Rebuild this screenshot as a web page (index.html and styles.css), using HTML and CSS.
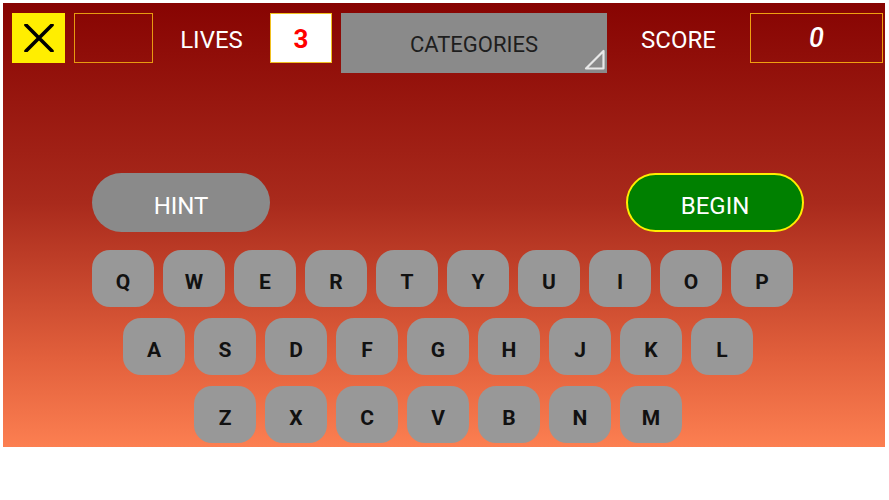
FILE: index.html
```html
<!DOCTYPE html>
<html>
<head>
<meta charset="utf-8">
<link rel="stylesheet" href="styles.css">
</head>
<body>
<div class="game">
  <div class="topbar">
    <div class="close-btn">
      <svg width="30" height="28" viewBox="0 0 30 28"><path d="M2 1 L28 27 M28 1 L2 27" stroke="#000" stroke-width="3.6" stroke-linecap="round"/></svg>
    </div>
    <div class="blank-box"></div>
    <div class="label lives-label">LIVES</div>
    <div class="lives-box">3</div>
    <div class="categories">
      <span>CATEGORIES</span>
      <svg class="corner" width="22" height="22" viewBox="0 0 22 22"><path d="M19.5 2 L19.5 19.5 L2 19.5 Z" fill="none" stroke="#e8e8e8" stroke-width="2.2" stroke-linejoin="round"/></svg>
    </div>
    <div class="label score-label">SCORE</div>
    <div class="score-box">0</div>
  </div>
  <div class="actions">
    <button class="hint">HINT</button>
    <button class="begin">BEGIN</button>
  </div>
  <div class="keyboard">
    <div class="row row1">
      <div class="key">Q</div><div class="key">W</div><div class="key">E</div><div class="key">R</div><div class="key">T</div><div class="key">Y</div><div class="key">U</div><div class="key">I</div><div class="key">O</div><div class="key">P</div>
    </div>
    <div class="row row2">
      <div class="key">A</div><div class="key">S</div><div class="key">D</div><div class="key">F</div><div class="key">G</div><div class="key">H</div><div class="key">J</div><div class="key">K</div><div class="key">L</div>
    </div>
    <div class="row row3">
      <div class="key">Z</div><div class="key">X</div><div class="key">C</div><div class="key">V</div><div class="key">B</div><div class="key">N</div><div class="key">M</div>
    </div>
  </div>
</div>
</body>
</html>
```

FILE: styles.css
```css
html, body {
  margin: 0;
  padding: 0;
  background: #ffffff;
}
body {
  padding: 3px;
  font-family: Roboto, "Liberation Sans", Arial, sans-serif;
}
.game {
  width: 882px;
  height: 444px;
  box-sizing: border-box;
  background: linear-gradient(to bottom, #870402 0%, #a92a1c 45%, #e2603c 80%, #fc7f51 100%);
  padding-top: 10px;
}
.topbar {
  display: flex;
  align-items: flex-start;
  padding-left: 9px;
}
.close-btn {
  width: 53px;
  height: 50px;
  background: #ffee00;
  display: flex;
  align-items: center;
  justify-content: center;
}
.close-btn svg { display: block; }
.blank-box {
  width: 79px;
  height: 50px;
  box-sizing: border-box;
  border: 1.5px solid #e89a10;
  margin-left: 9px;
}
.label {
  color: #ffffff;
  font-size: 24px;
  height: 50px;
  line-height: 54px;
  text-align: center;
}
.lives-label { width: 117px; }
.score-label { width: 143px; }
.lives-box {
  width: 62px;
  height: 50px;
  box-sizing: border-box;
  background: #ffffff;
  border: 1.5px solid #f0c020;
  color: #ff0000;
  font-weight: bold;
  font-size: 26px;
  line-height: 50px;
  text-align: center;
}
.categories {
  position: relative;
  width: 266px;
  height: 60px;
  margin-left: 9px;
  background: #8a8a8a;
  color: #1e1e1e;
  font-size: 22px;
  line-height: 64px;
  text-align: center;
}
.categories .corner {
  position: absolute;
  right: 1px;
  bottom: 2px;
}
.score-box {
  width: 133px;
  height: 50px;
  box-sizing: border-box;
  border: 1.5px solid #f0a010;
  color: #ffffff;
  font-style: italic;
  font-size: 27px;
  font-weight: 500;
  line-height: 48px;
  text-align: center;
}
.actions {
  display: flex;
  justify-content: space-between;
  margin-top: 100px;
  padding-left: 89px;
  padding-right: 81px;
}
.actions button {
  width: 178px;
  height: 59px;
  border-radius: 30px;
  font-family: Roboto, "Liberation Sans", Arial, sans-serif;
  font-size: 24px;
  color: #ffffff;
  padding: 6px 0 0 0;
  margin: 0;
}
.hint {
  background: #8a8a8a;
  border: none;
}
.begin {
  background: #008000;
  border: 2px solid #ffee00;
}
.keyboard {
  margin-top: 18px;
  display: flex;
  flex-direction: column;
  gap: 11px;
}
.row {
  display: flex;
  gap: 9px;
}
.row1 { margin-left: 89px; }
.row2 { margin-left: 120px; }
.row3 { margin-left: 191px; }
.key {
  width: 62px;
  height: 57px;
  border-radius: 18px;
  background: #989898;
  color: #111111;
  font-weight: bold;
  font-size: 21px;
  line-height: 64px;
  text-align: center;
}
```
